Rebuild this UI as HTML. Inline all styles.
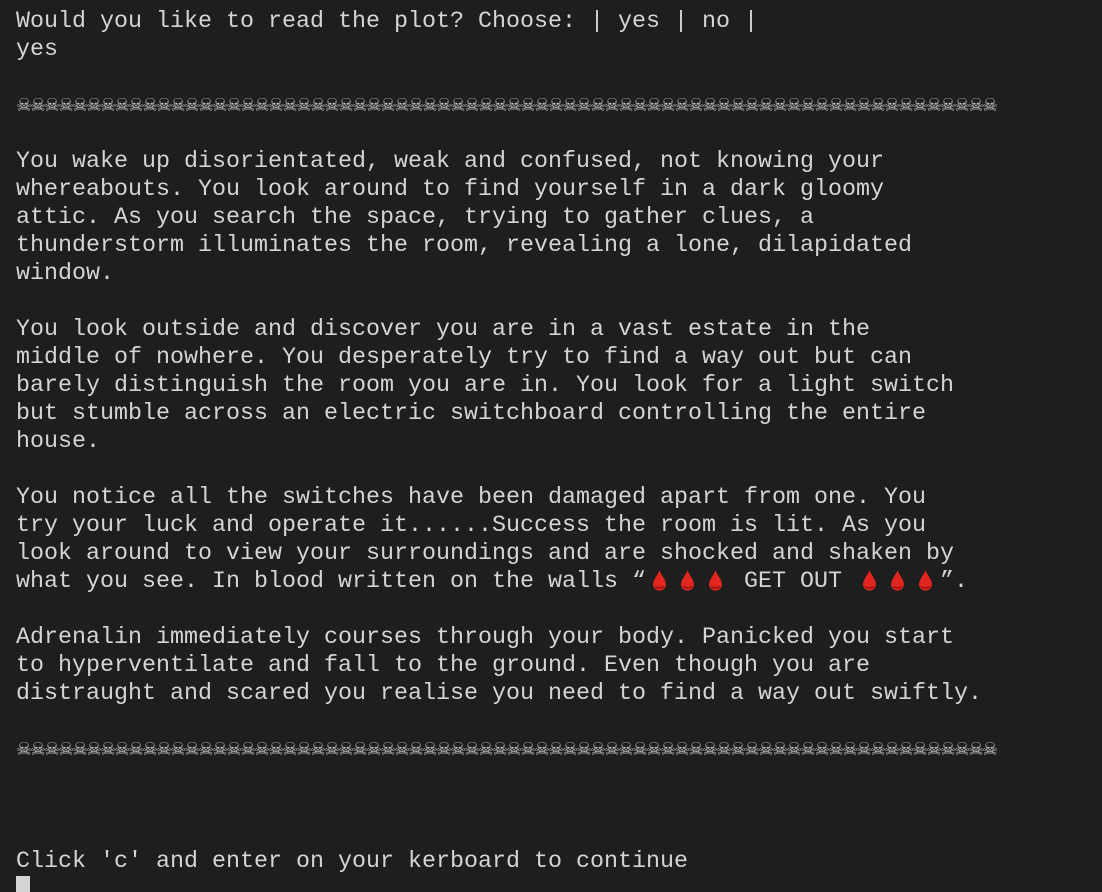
<!DOCTYPE html>
<html><head><meta charset="utf-8"><style>
html,body{margin:0;padding:0;background:#1e1e1e;width:1102px;height:892px;overflow:hidden}
pre{margin:0;padding:8px 0 0 16px;font-family:"Liberation Mono",monospace;font-size:23.33px;line-height:28px;color:#d4d4d4;white-space:pre}
.sep{display:inline-block;height:28px;white-space:nowrap;font-size:0;vertical-align:top}
.sep span{display:inline-block;width:14px;height:28px;text-align:center;font-family:"DejaVu Sans",sans-serif;font-size:18px;line-height:28px;color:#c8c8c8;vertical-align:top}
.d{display:inline-block;width:28px;height:28px;vertical-align:top;position:relative}
.d svg{position:absolute;left:6px;top:2px}
.cur{display:inline-block;width:14px;height:28px;background:#d4d4d4;vertical-align:top}
</style></head><body><pre>Would you like to read the plot? Choose: | yes | no |
yes

<span class="sep" id="s1"></span>

You wake up disorientated, weak and confused, not knowing your
whereabouts. You look around to find yourself in a dark gloomy
attic. As you search the space, trying to gather clues, a
thunderstorm illuminates the room, revealing a lone, dilapidated
window.

You look outside and discover you are in a vast estate in the
middle of nowhere. You desperately try to find a way out but can
barely distinguish the room you are in. You look for a light switch
but stumble across an electric switchboard controlling the entire
house.

You notice all the switches have been damaged apart from one. You
try your luck and operate it......Success the room is lit. As you
look around to view your surroundings and are shocked and shaken by
what you see. In blood written on the walls “<span class="d"><svg width="15" height="22" viewBox="0 0 14 20"><path d="M7 0C5 5 1 9 1 13a6 6 0 0 0 12 0C13 9 9 5 7 0z" fill="#e0261f"/><path d="M3 15a5 4 0 0 0 8 0" stroke="#a01010" stroke-width="1.5" fill="none"/></svg></span><span class="d"><svg width="15" height="22" viewBox="0 0 14 20"><path d="M7 0C5 5 1 9 1 13a6 6 0 0 0 12 0C13 9 9 5 7 0z" fill="#e0261f"/><path d="M3 15a5 4 0 0 0 8 0" stroke="#a01010" stroke-width="1.5" fill="none"/></svg></span><span class="d"><svg width="15" height="22" viewBox="0 0 14 20"><path d="M7 0C5 5 1 9 1 13a6 6 0 0 0 12 0C13 9 9 5 7 0z" fill="#e0261f"/><path d="M3 15a5 4 0 0 0 8 0" stroke="#a01010" stroke-width="1.5" fill="none"/></svg></span> GET OUT <span class="d"><svg width="15" height="22" viewBox="0 0 14 20"><path d="M7 0C5 5 1 9 1 13a6 6 0 0 0 12 0C13 9 9 5 7 0z" fill="#e0261f"/><path d="M3 15a5 4 0 0 0 8 0" stroke="#a01010" stroke-width="1.5" fill="none"/></svg></span><span class="d"><svg width="15" height="22" viewBox="0 0 14 20"><path d="M7 0C5 5 1 9 1 13a6 6 0 0 0 12 0C13 9 9 5 7 0z" fill="#e0261f"/><path d="M3 15a5 4 0 0 0 8 0" stroke="#a01010" stroke-width="1.5" fill="none"/></svg></span><span class="d"><svg width="15" height="22" viewBox="0 0 14 20"><path d="M7 0C5 5 1 9 1 13a6 6 0 0 0 12 0C13 9 9 5 7 0z" fill="#e0261f"/><path d="M3 15a5 4 0 0 0 8 0" stroke="#a01010" stroke-width="1.5" fill="none"/></svg></span>”.

Adrenalin immediately courses through your body. Panicked you start
to hyperventilate and fall to the ground. Even though you are
distraught and scared you realise you need to find a way out swiftly.

<span class="sep" id="s2"></span>



Click 'c' and enter on your kerboard to continue
<span class="cur"></span></pre>
<script>
for(const id of ["s1","s2"]){const e=document.getElementById(id);let h="";for(let i=0;i<70;i++)h+="<span>☠</span>";e.innerHTML=h;}
</script>
</body></html>
